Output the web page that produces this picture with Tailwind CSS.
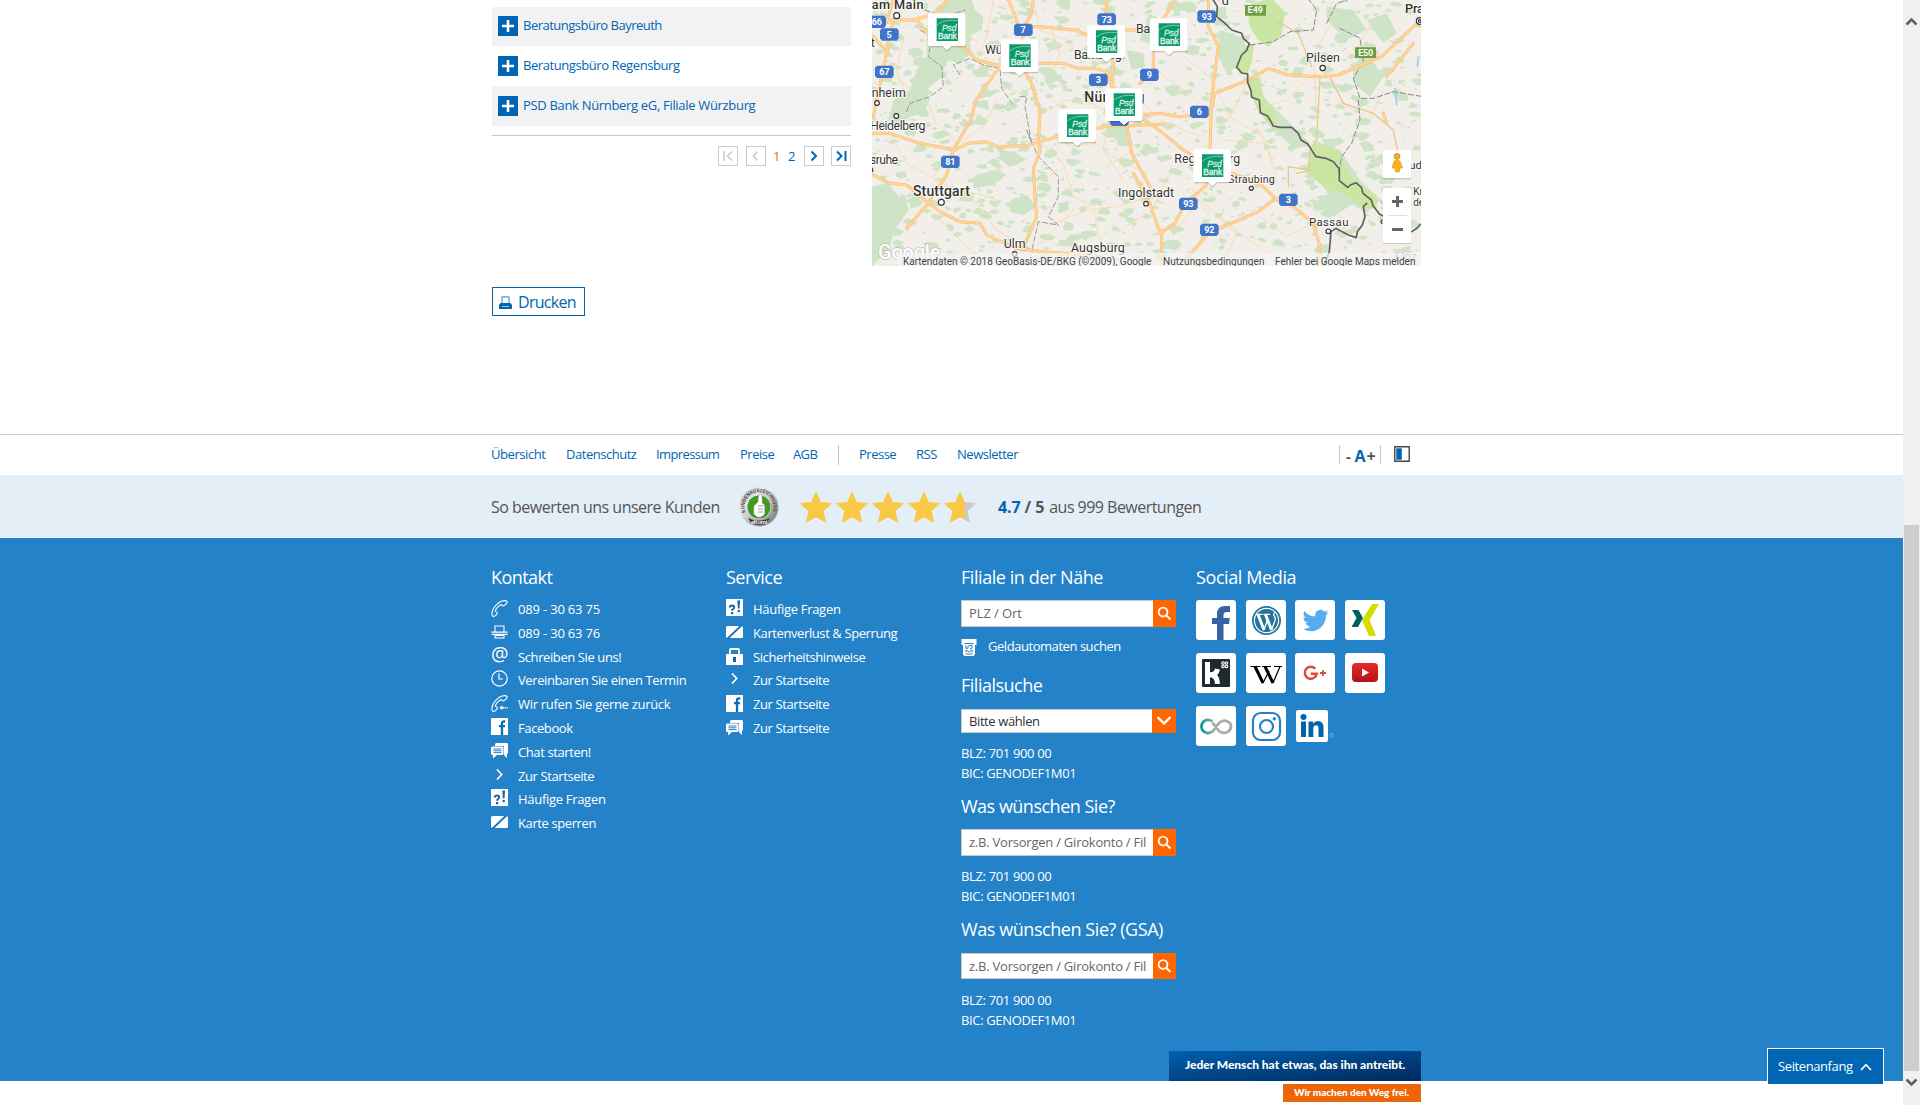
<!DOCTYPE html>
<html lang="de">
<head>
<meta charset="utf-8">
<title>PSD Bank</title>
<script src="https://cdn.jsdelivr.net/npm/@tailwindcss/browser@4"></script>
</head>
<body class="relative flex h-[1105px] overflow-hidden bg-white font-['Open_Sans','Noto_Sans',sans-serif] text-[13px] tracking-[-0.4px]">

<!-- shared symbols -->
<svg class="hidden">
  <symbol id="plus" viewBox="0 0 20 20"><path fill="#0066b3" d="M0 0h20v20H0z"/><path stroke="#fff" stroke-width="2.6" d="M10 4v12M4 10h12"/></symbol>
  <symbol id="phone" viewBox="0 0 17 17"><path fill="none" stroke="#fff" stroke-width="1.1" stroke-linejoin="round" d="M16 1.200C13.500-.2 9 1 6 4.200C2.500 7.700.2 12 1.200 15.500C1.600 16.600 2.800 16.500 3.800 16C5 15.200 6.300 14 6.300 13C6.300 12 5 11.400 4.300 11.200C5 8.500 7.500 5.800 10.500 4.500C11 5.400 11.700 6.200 12.700 5.800C14.500 5 16.800 2.500 16 1.200Z"/></symbol>
  <symbol id="callback" viewBox="0 0 17 17"><path fill="none" stroke="#fff" stroke-width="1.100" stroke-linejoin="round" d="M16 1.200C13.500-.2 9 1 6 4.200C2.500 7.700.2 12 1.200 15.500C1.600 16.600 2.800 16.500 3.800 16C5 15.200 6.300 14 6.300 13C6.300 12 5 11.400 4.300 11.200C5 8.500 7.500 5.800 10.500 4.500C11 5.400 11.700 6.200 12.700 5.800C14.500 5 16.800 2.500 16 1.200Z"/><path fill="#fff" d="M8.300 12.700l3-2.300v1.600h2v1.400h-2V15zM14 12h1v1.400h-1zM15.700 12h1v1.400h-1z"/></symbol>
  <symbol id="fax" viewBox="0 0 17 14"><path fill="none" stroke="#fff" stroke-width="1.100" d="M4 7V1h9v6M4 10.500h9V13H4z"/><path fill="#fff" d="M.5 6.500h16v1.200H.5zM.5 8.700h16V10H.5z"/></symbol>
  <symbol id="clock" viewBox="0 0 17 17"><circle cx="8.500" cy="8.500" r="7.700" fill="none" stroke="#fff" stroke-width="1.200"/><path fill="none" stroke="#fff" stroke-width="1.200" d="M8 3.500V9h4"/></symbol>
  <symbol id="fb" viewBox="0 0 17 17"><path fill="#fff" d="M0 0h17v17H0z"/><path fill="none" stroke="#0f6db8" stroke-width="2.300" d="M14.300 3.300h-1.300q-2 0-2 2V17M8 8.200h6"/></symbol>
  <symbol id="chat" viewBox="0 0 17 16"><path fill="#fff" d="M5 0h11l1 1v9l-1 1v4l-3-3V3H4V1z"/><path fill="#fff" d="M1 3.500h10.500l1 1V11l-1 1H6l-4 3.500V12H1l-1-1V4.500z"/><path stroke="#2482c8" d="M2.500 6h8M2.500 7.800h8M2.500 9.600h8"/></symbol>
  <symbol id="chev" viewBox="0 0 17 17"><path fill="none" stroke="#fff" stroke-width="1.700" d="M6 3.500l4.700 5L6 13.500"/></symbol>
  <symbol id="faq" viewBox="0 0 17 17"><path fill="#fff" d="M0 0h17v17H0z"/><path fill="none" stroke="#1463a8" stroke-width="1.900" d="M3.600 8.500q.3-2 2.400-2 2.200 0 2.200 1.800 0 1.200-1.200 1.800-.9.500-.9 1.700"/><path fill="#1463a8" d="M5 13h2.200v2.200H5zM11.300 1.500h2.800l-.6 8h-1.600zM11.600 11h2.200v2.200h-2.200z"/></symbol>
  <symbol id="card" viewBox="0 0 17 14"><rect x="0" y="1" width="17" height="12" rx="1.500" fill="#fff"/><path stroke="#1d74b8" stroke-width="1.900" d="M1.200 14L15.800 0"/></symbol>
  <symbol id="lock" viewBox="0 0 17 17"><path fill="none" stroke="#fff" stroke-width="1.800" d="M4 7V2q0-1 1-1h7q1 0 1 1v5"/><path fill="#fff" d="M0 6h17v11H0z"/><path fill="#1463a8" d="M7 9h3v5H7z"/></symbol>
  <symbol id="atm" viewBox="0 0 16 17"><path fill="#fff" d="M.5 0h15v6h-1.500v9.500L12.500 17h-9L2 15.500V6H.5z"/><path fill="none" stroke="#2482c8" stroke-width="1" d="M3.500 4.500h9M4.500 15h7M5 6.500v2.800h2V7M7.500 6.500h3.500v2.800H9M5 13v-2l3 2 3-2v2.500"/></symbol>
  <symbol id="lens" viewBox="0 0 24 27"><circle cx="10.500" cy="12" r="4.600" fill="none" stroke="#fff" stroke-width="1.900"/><path stroke="#fff" stroke-width="2.200" d="M13.700 15.200l4.500 4.500"/></symbol>
  <symbol id="star" viewBox="0 0 32 31"><path stroke-linejoin="round" stroke-width="1.500" d="M16 1.300l4.300 9.900 10.500 1-8 7.100 2.400 10.700L16 24.900 6.800 30l2.400-10.700-8-7.100 10.500-1z"/></symbol>
  <symbol id="pin" viewBox="0 0 120 116"><path fill="#000" opacity=".18" d="M8 6h106v98H72l-13 14-14-14H8z"/><path fill="#fff" d="M9 2h98q7 0 7 7v84q0 7-7 7H72l-14 13-14-13H8q-7 0-7-7V9q0-7 8-7z"/><path fill="#0b9a6b" d="M27 17h64v68H27z"/><path fill="none" stroke="#b5e0d0" stroke-width="2" d="M28 37Q50 19 90 24"/><text x="43" y="56" fill="#d8f2e8" font-family="Liberation Sans" font-size="27" font-style="italic" stroke="#d8f2e8" stroke-width=".8" textLength="43" lengthAdjust="spacingAndGlyphs">Psd</text><text x="31" y="80" fill="#e6f7f0" font-family="Liberation Sans" font-size="26" stroke="#e6f7f0" stroke-width="1" textLength="56" lengthAdjust="spacingAndGlyphs">Bank</text></symbol>
</svg>

<div class="flex w-[1903px] shrink-0 flex-col">

  <!-- branch list and map -->
  <section class="flex h-[434px] shrink-0 pl-[492px]">
    <div class="flex w-[359px] flex-col pt-[7px] text-[#0066b3]">
      <div class="flex h-[39px] items-center gap-[5px] bg-[#f2f2f2] pb-[1px] pl-[6px]"><svg class="size-[20px]"><use href="#plus"/></svg><a class="tracking-[-0.5px]">Beratungsbüro Bayreuth</a></div>
      <div class="flex h-[40px] items-center gap-[5px] pl-[6px]"><svg class="size-[20px]"><use href="#plus"/></svg><a class="tracking-[-0.42px]">Beratungsbüro Regensburg</a></div>
      <div class="flex h-[40px] items-center gap-[5px] bg-[#f2f2f2] pl-[6px]"><svg class="size-[20px]"><use href="#plus"/></svg><a class="tracking-[-0.32px]">PSD Bank Nürnberg eG, Filiale Würzburg</a></div>
      <div class="mt-[9px] flex h-[31px] items-end justify-end border-t border-[#c8c8c8] leading-[20px]">
        <svg class="size-[20px] border border-[#ccc]" viewBox="0 0 18 18" fill="none" stroke="#ccc" stroke-width="1.700"><path d="M5 4v10M13 4.500L8.500 9l4.500 4.500"/></svg>
        <svg class="ml-[8px] size-[20px] border border-[#ccc]" viewBox="0 0 18 18" fill="none" stroke="#ccc" stroke-width="1.700"><path d="M10.500 4.500L6.500 9l4 4.500"/></svg>
        <span class="ml-[7px] w-[8px] text-[#f60]">1</span><span class="ml-[7px] w-[8px]">2</span>
        <svg class="ml-[8px] size-[20px] border border-[#ccc]" viewBox="0 0 18 18" fill="none" stroke="#0066b3" stroke-width="2"><path d="M6.500 4.500L11 9l-4.500 4.500"/></svg>
        <svg class="ml-[7px] size-[20px] border border-[#ccc]" viewBox="0 0 18 18" fill="none" stroke="#0066b3" stroke-width="2"><path d="M5 4.500L9.500 9 5 13.500M13.500 4v10"/></svg>
      </div>
      <a class="mt-[121px] flex h-[29px] w-[93px] items-center gap-[6px] border border-[#0066b3] pl-[6px] text-[16px] tracking-[-0.7px]">
        <svg class="mt-[1px] h-[13px] w-[13px] shrink-0" viewBox="0 0 13 13"><path fill="none" stroke="#5a9bd0" stroke-width="1.200" d="M3 7V.8h7V7"/><path fill="#0066b3" d="M1.500 7h10L13 9v4H0V9z"/><path fill="#9cc4e4" d="M3 10h7v1H3z"/></svg>Drucken</a>
    </div>

    <svg id="map" class="ml-[21px] h-[266px] w-[549px] shrink-0 bg-[#f2efeb]" viewBox="872 0 549 266" font-family="Roboto, sans-serif">
      <g id="woods" fill="#cfe3c6"></g>
      <!-- west half -->
      <g transform="translate(870 0) scale(.33333)" fill="none" stroke-linejoin="round" stroke-linecap="round">
        <g fill="#cfe3c6">
          <path d="M170 80l30-60 40-20h65l10 30 25 20-5 40-40 20 10 50-40 30-30-10-30 60-40 30 15 30-20 40-40 10-40 30-25-20 15-60 50-30 20-60 30-40z"/>
          <path d="M5 560l50-10 30 40 20-5 10 45-40 60-20 60-50 50z"/><path d="M420 600l50-15 30 35-40 25-40-10zM310 530l60-20 30 20-30 25-60 10zM380 470l60-10 30 20-50 20z"/>
          <path d="M520 220l35-10 15 30-40 15zM730 380l40 5 20 50-40 5-20-30zM770 150l50 10 5 40-40 10z"/>
        </g>
        <g stroke="#f7dcae" stroke-width="3">
          <path d="M60 400l50 90 110 60 70 50M250 450l-60 80 40 60 90-10 60 20M180 630l90 90 60 60M330 190l60 70 70 20M490 0l20 90 80 30 60 80 40 10M250 440l90-60 40-80M540 80l30 80-30 80M500 350l90-50 70 10M510 430l70 60 30 100 60 30 15 90 30 90M620 620l-120 120M530 680l120-50 90-10 100-30M650 300l70 40-20 110 60 90M100 120l-20 90 30 80-30 90M10 250l60-20 60 40M260 0l-20 70 90 60M370 0l-20 110-30 70M600 440l80-10 60 50 90 40M310 600l70 90 50 30M560 510l-70 60M170 300l30 70 60 60M710 500l80-50M740 700l90-60"/>
        </g>
        <g stroke="#999" stroke-width="3" stroke-dasharray="16 8"><path d="M150 90l35 20-10 60 40 30 5 60-40 30-60 20-10 25M165 30l60 20 60-20M270 225l-20-30 50-20 40 20 50 10 5 60 35 50M450 290l20 0-5 30 20 110-15-40 35 80 60 60 0 60-30 60 30 25-60-10-20 90"/></g>
        <g stroke="#fbb766" stroke-width="9">
          <path d="M10 350l60-290M0 400l60 0 90 30 105 20 40-20 50-5 40 15 85-3 120-35 130-25 60 0 100-5"/><path d="M60 60h80l50 60 90 20 40 40 60 15 100-5 100 0 45 15 50 0 35 10 20 55"/><path d="M385 205l-70 100-10 50-55 95-20 75-60 90-60 70"/><path d="M460 100l-10 90 35 60 25 85-5 90 5 30-20 50 5 85 5 60-25 60-15 30"/><path d="M0 520l60 30 50 5 60 50 40 30 60 30 60 5 20 35 90 40 80 10 60 5 110 10"/><path d="M415 0l20 45 10 35 70 0 100 10 45 20 100-20 90 0"/>
          <path d="M490 0l-10 50-25 40M710 0v60l0 60 20 70-5 80-20 70M770 370l15 90 55 100M0 50l50 15 20-65M130 60l70-20 30-40M0 100l55 60"/>
        </g>
        <g stroke="#ffd59b" stroke-width="6">
          <path d="M10 350l60-290M0 400l60 0 90 30 105 20 40-20 50-5 40 15 85-3 120-35 130-25 60 0 100-5"/><path d="M60 60h80l50 60 90 20 40 40 60 15 100-5 100 0 45 15 50 0 35 10 20 55"/><path d="M385 205l-70 100-10 50-55 95-20 75-60 90-60 70"/><path d="M460 100l-10 90 35 60 25 85-5 90 5 30-20 50 5 85 5 60-25 60-15 30"/><path d="M0 520l60 30 50 5 60 50 40 30 60 30 60 5 20 35 90 40 80 10 60 5 110 10"/><path d="M415 0l20 45 10 35 70 0 100 10 45 20 100-20 90 0"/>
          <path d="M490 0l-10 50-25 40M710 0v60l0 60 20 70-5 80-20 70M770 370l15 90 55 100M0 50l50 15 20-65M130 60l70-20 30-40M0 100l55 60"/>
        </g>
      </g>
      <!-- east half -->
      <g transform="translate(1140 0) scale(.33333)" fill="none" stroke-linejoin="round" stroke-linecap="round">
        <g fill="#cfe3c6">
          <path d="M240 90l60 20 20 30-30 60-30 20-30-60zM330 240l50 60 60 60 80 80-60 0-70-60-40-60zM560 20l80 10 40 60-60 30-60-60zM640 190l50-20 40 60-40 60-50-40zM520 420l80 30 60 90 60 60-40 40-80-50-90-60zM680 60l60-20 30 60-40 30zM580 570l60 40-60 40-60-40zM20 60l50 20-20 60-50-20z"/>
        </g>
        <g fill="#cbe6a3"><path d="M325 70l10-60 60-15 40 40-10 70-40 35-30-20-20-30zM322 135l20 0-5 40-15 50-38-20 10-30zM320 240l40-10 10 60 30 40 10 40-30-5-30-40-20-50zM520 440l20-10 60 25 20 60 50 50 40 20 0 40-40 0-50-40-60-15-60-60z"/></g>
        <g stroke="#f7dcae" stroke-width="3"><path d="M0 300l60 60 120 50 90-60 60-120M130 170l80 60 60 120 100 60 40 120M250 420l120 10M30 640l60-120 80-60M100 700l80-100 120 100 80 60M230 640l60 60-40 90M360 650l80 60 80-40M580 60l-60 100 10 200M590 300l100 60 40-90M340 330l100-30 60-60M700 60l-60 100M400 480l-50-100M170 300l-120-90M680 720l-90-80M740 700l60-60M150 560l60 90"/></g>
        <g stroke="#e3c98c" stroke-width="4"><path d="M405 60l70 40 40 100M540 230l-10 190-20 30-5 60-60-10 0 60M570 230l40 80 90 30 60 50 15 70M470 520l50-10"/></g>
        <g stroke="#888" stroke-width="3" stroke-dasharray="16 8"><path d="M330 135l70-10 50-30 70-5 10-60-30-40M560 70l30-60 30-10M600 85l60 30 10 70-30 50 20 60 40 0 60-20 90 15M655 300l5 60-25 70-30 40-10 50"/></g>
        <g stroke="#fbb766" stroke-width="9"><path d="M205 0l0 80 30 60-20 150-5 160 15 60-30 50-60 50-30 60-45 30-30-90-50-90M65 690v110M0 345l60-5 60 10 90-10 15-60 100-40 60-35 60 20 90 5 60-5 70-30 60-25 100-95 70 10M0 350l70 50 60 50 80 50 80 25 80 35 30 30 60 30 60 50 20 70-10 75M145 770l60-70 150-65 45-35 50-5M40 150l0 60-40 40M105 0l-30 50M740 230l80-100M730 340l10 30"/></g>
        <g stroke="#ffd59b" stroke-width="6"><path d="M205 0l0 80 30 60-20 150-5 160 15 60-30 50-60 50-30 60-45 30-30-90-50-90M65 690v110M0 345l60-5 60 10 90-10 15-60 100-40 60-35 60 20 90 5 60-5 70-30 60-25 100-95 70 10M0 350l70 50 60 50 80 50 80 25 80 35 30 30 60 30 60 50 20 70-10 75M145 770l60-70 150-65 45-35 50-5M40 150l0 60-40 40M105 0l-30 50M740 230l80-100M730 340l10 30"/></g>
        <path stroke="#606060" stroke-width="5" d="M220 0l12 20-2 30 25 20 20 20 30 10 5 15 18 16-8 20-15 14-15 36 15 18 18 3 0 25 10 25 2 20 23 8 3 38 22 10 17 30 20 4 35 0 20 18 8 20 20 12 17 26 8 12 30 5 22 10 18 22 0 35 25 20 10-8 15-6 16 14 5 18 25 20 5 17 20 26 25 11 30 22 5 20M680 610l-10 10 5 30-8 25-15 20-3 18-24-8-27-14-10-6-15 10-3 35-2 25-10 28-10 16M815 695l16-10 10-12"/>
        <path stroke="#8fc3f5" stroke-width="4" d="M765 265l5 50M835 175l-3 25M720 600l8 12"/>
      </g>
      <!-- road shields -->
      <g transform="translate(870 0) scale(.33333)" font-size="27" font-weight="700" fill="#fff" text-anchor="middle">
        <g fill="#3f74c8"><path id="sh" d="M-22-19h44l6 6v24l-6 7h-44l-6-7V-13z" transform="translate(20 66)"/><use href="#sh" x="38" y="38"/><use href="#sh" x="23" y="150"/><use href="#sh" x="440" y="24"/><use href="#sh" x="690" y="-7"/><use href="#sh" x="665" y="174"/><use href="#sh" x="221" y="420"/><use href="#sh" x="728" y="294"/><use href="#sh" x="818" y="159"/><use href="#sh" x="990" y="-16"/><use href="#sh" x="968" y="270"/><use href="#sh" x="935" y="546"/><use href="#sh" x="998" y="624"/><use href="#sh" x="1235" y="534"/></g>
        <text x="20" y="75">66</text><text x="57" y="113">5</text><text x="43" y="225">67</text><text x="459" y="100">7</text><text x="710" y="69">73</text><text x="685" y="249">3</text><text x="241" y="495">81</text><text x="838" y="234">9</text><text x="1010" y="60">93</text><text x="988" y="345">6</text><text x="955" y="621">93</text><text x="1018" y="699">92</text><text x="1255" y="609">3</text>
        <g fill="#6d9e42"><path d="M1125 15h63v32h-63zM1455 142h63v32h-63z"/></g><text x="1156" y="40">E49</text><text x="1487" y="168">E50</text>
      </g>
      <!-- places -->
      <g transform="translate(870 0) scale(.33333)" fill="#333" stroke="#fff" stroke-width="6" stroke-opacity=".75" paint-order="stroke" font-size="37" stroke-linejoin="round">
        <text x="5" y="26" font-size="38" font-weight="500" textLength="155">am Main</text>
        <text x="5" y="292" textLength="102">nheim</text><text x="0" y="391" textLength="166">Heidelberg</text><text x="0" y="493" textLength="84">sruhe</text><text x="-18" y="140">dt</text>
        <text x="129" y="587" font-size="42" font-weight="500" textLength="170">Stuttgart</text><text x="401" y="745" textLength="65">Ulm</text><text x="603" y="756" textLength="161">Augsburg</text>
        <text x="345" y="162">Wü</text><text x="612" y="178" textLength="143">Bamberg</text><text x="643" y="305" font-size="42" font-weight="500" textLength="180">Nürnberg</text><text x="798" y="99">Ba</text>
        <text x="744" y="592" textLength="168">Ingolstadt</text><text x="913" y="490" textLength="197">Regensburg</text><text x="1074" y="549" font-size="32" textLength="140">Straubing</text>
        <text x="1308" y="187" textLength="101">Pilsen</text><text x="1317" y="678" font-size="34" textLength="118">Passau</text><text x="1605" y="38" font-size="38" font-weight="500">Prag</text><text x="1618" y="507" font-size="34">udw</text><text x="1630" y="585" font-size="30">Kr</text><text x="1630" y="618" font-size="30">de</text><text x="1575" y="783" fill="#888">Linz</text><text x="1055" y="14" font-size="38">d</text>
      </g>
      <g transform="translate(870 0) scale(.33333)" fill="#fff" stroke="#333" stroke-width="3.500"><circle cx="80" cy="47" r="9"/><circle cx="21" cy="309" r="7"/><circle cx="79" cy="348" r="7"/><circle cx="214" cy="607" r="9"/><circle cx="434" cy="762" r="7"/><circle cx="828" cy="611" r="7"/><circle cx="1144" cy="565" r="6"/><circle cx="1358" cy="204" r="8"/><circle cx="1375" cy="694" r="7"/><circle cx="1649" cy="63" r="10"/><circle cx="1649" cy="63" r="4"/><path fill="#ddd" d="M0 504q10-2 8 12M1537 659q-8 6 0 12"/></g>
      <!-- branch markers -->
      <g transform="translate(870 0) scale(.33333)"><use href="#pin" x="173" y="38" width="120" height="116"/><use href="#pin" x="391" y="116" width="120" height="116"/><use href="#pin" x="651" y="74" width="120" height="116"/><use href="#pin" x="704" y="263" width="120" height="116"/><use href="#pin" x="564" y="326" width="120" height="116"/><use href="#pin" x="839" y="53" width="120" height="116"/><use href="#pin" x="969" y="446" width="120" height="116"/></g>
      <!-- controls and credits -->
      <g fill="#000" opacity=".15"><rect x="1383" y="150.500" width="28" height="29" rx="1"/><rect x="1383" y="189" width="28" height="55" rx="1"/></g>
      <g fill="#fff"><rect x="1383" y="150" width="28" height="28" rx="1"/><rect x="1383" y="188" width="28" height="55" rx="1"/></g>
      <path stroke="#e0e0e0" d="M1388 215.500h19"/><path stroke="#666" stroke-width="3" d="M1392 201.500h11M1397.500 196v11M1392 229.500h11"/>
      <path fill="#f5b21d" stroke="#d99a12" stroke-width=".6" d="M1394 161q3-2 6 0l2.500 6.500-1.500 1-1-1.500-.5 5h-4l-.8-5-1 1.500-1.500-1z"/><circle cx="1397" cy="156.500" r="3" fill="#f5b21d" stroke="#9b6c10" stroke-width=".5"/><path fill="#f5b21d" d="M1395 164h1.800v8h-1.800zM1397.600 164h1.800v8h-1.800z"/>
      <text x="878" y="259" font-size="20" font-weight="500" fill="#fff" stroke="#999" stroke-width="1.600" stroke-opacity=".5" paint-order="stroke" textLength="62">Google</text>
      <path fill="#f5f5f5" fill-opacity=".7" d="M897 253h524v13H897z"/>
      <g font-size="10" fill="#444"><text x="903" y="265" textLength="248">Kartendaten © 2018 GeoBasis-DE/BKG (©2009), Google</text><text x="1163" y="265" textLength="101">Nutzungsbedingungen</text><text x="1275" y="265" textLength="140">Fehler bei Google Maps melden</text></g>
    </svg>
  </section>

  <!-- meta navigation -->
  <nav class="flex h-[41px] shrink-0 items-center border-t border-[#c8c8c8] pl-[491px] text-[13px] text-[#0066b3]">
    <a class="w-[75px] tracking-[-0.430px]">Übersicht</a><a class="w-[90px] tracking-[-0.470px]">Datenschutz</a><a class="w-[84px] tracking-[-0.600px]">Impressum</a><a class="w-[53px] tracking-[-0.500px]">Preise</a><a class="w-[45px] tracking-[-0.600px]">AGB</a>
    <span class="h-[20px] w-[21px] border-l border-[#c8c8c8]"></span>
    <a class="w-[57px] tracking-[-0.500px]">Presse</a><a class="w-[41px] tracking-[-0.500px]">RSS</a><a class="w-[382px] tracking-[-0.480px]">Newsletter</a>
    <span class="-mt-[2px] flex h-[19px] w-[42px] items-center gap-[4px] border-x border-[#c8c8c8] pt-[4px] pl-[6px] font-bold text-[#555]"><span class="text-[15px]">-</span><span class="flex items-center text-[16px] tracking-[0px] text-[#0066b3]">A<span class="pl-[1px] text-[#555]">+</span></span></span>
    <svg class="-mt-[2px] ml-[13px] size-[16px]" viewBox="0 0 16 16"><path fill="#fff" stroke="#444" stroke-width="1.400" d="M.8.8h14.400v14.400H.8z"/><path fill="#0066b3" d="M2.300 2.300h5.500v11.400H2.300z"/></svg>
  </nav>

  <!-- customer rating -->
  <section class="flex h-[63px] shrink-0 items-center bg-[#e4eef7] pl-[491px] text-[16px] text-[#555]">
    <span class="w-[248px] whitespace-nowrap tracking-[-0.500px]">So bewerten uns unsere Kunden</span>
    <svg class="size-[40px] shrink-0" viewBox="0 0 40 40">
      <defs><linearGradient id="silver" x1="0" y1="0" x2="1" y2="1"><stop offset="0" stop-color="#8a8a8a"/><stop offset=".3" stop-color="#e8e8e8"/><stop offset=".7" stop-color="#a5a5a5"/><stop offset="1" stop-color="#666"/></linearGradient><path id="arc" d="M6.500 25A14.500 14.500 0 1 1 33.500 25"/></defs>
      <circle cx="20" cy="20" r="19.500" fill="url(#silver)"/><circle cx="20" cy="20" r="12.200" fill="#ddd"/><circle cx="20" cy="20" r="11.500" fill="#3f9a22"/>
      <text font-family="Liberation Sans" font-size="5" font-weight="700" fill="#444" letter-spacing="0"><textPath href="#arc" textLength="55" lengthAdjust="spacingAndGlyphs">KUNDENAUSZEICHNUNG</textPath></text>
      <path fill="#fff" stroke="#888" stroke-width=".5" d="M19.500 9q2-3 3.500-1l.3 8q2.500 1 2.500 4v7q-3 4-8 3l-3-3v-8l4-4z"/><path stroke="#777" stroke-width=".7" d="M19 19h5M19 22h5M19 25h5"/>
      <path fill="#3a3a3a" d="M9 31q11 5 22 0l-3 5q-8 4-16 0z"/><text x="12" y="36.500" font-family="Liberation Sans" font-size="6" font-weight="700" fill="#eee" textLength="16">eKomi</text>
    </svg>
    <svg class="ml-[21px] h-[32px] w-[178px] shrink-0" viewBox="0 0 178 32"><defs><linearGradient id="part"><stop offset=".67" stop-color="#f9c846"/><stop offset=".67" stop-color="#c9cbd0"/></linearGradient></defs>
      <g fill="#f9c846" stroke="#f9c846"><use href="#star" width="32" height="32"/><use href="#star" x="36" width="32" height="32"/><use href="#star" x="72" width="32" height="32"/><use href="#star" x="108" width="32" height="32"/></g><use href="#star" x="144" width="32" height="32" fill="url(#part)" stroke="url(#part)"/></svg>
    <b class="ml-[20px] whitespace-nowrap tracking-[-0.100px]"><span class="text-[#0066b3]">4.7</span> / 5</b><span class="ml-[5px] whitespace-nowrap tracking-[-0.530px]">aus 999 Bewertungen</span>
  </section>

  <!-- footer -->
  <footer class="relative flex h-[543px] shrink-0 bg-[#2482c8] pl-[491px] text-white">
    <div class="w-[235px] pt-[27px]">
      <h3 class="h-[33px] text-[18px] leading-[24px] tracking-[-0.550px]">Kontakt</h3>
      <ul class="flex flex-col leading-[23.8px] whitespace-nowrap">
        <li class="flex h-[23.800px] gap-[10px] tracking-[-0.180px]"><svg class="mt-[2px] size-[17px]"><use href="#phone"/></svg>089 - 30 63 75</li>
        <li class="flex h-[23.800px] gap-[10px] tracking-[-0.180px]"><svg class="mt-[3px] h-[14px] w-[17px]"><use href="#fax"/></svg>089 - 30 63 76</li>
        <li class="flex h-[23.800px] gap-[10px]"><span class="-mt-[4px] w-[17px] text-[19.500px] tracking-[-1px]">@</span>Schreiben Sie uns!</li>
        <li class="flex h-[23.800px] gap-[10px]"><svg class="mt-[1px] size-[17px]"><use href="#clock"/></svg>Vereinbaren Sie einen Termin</li>
        <li class="flex h-[23.800px] gap-[10px] tracking-[-0.300px]"><svg class="mt-[2px] size-[17px]"><use href="#callback"/></svg>Wir rufen Sie gerne zurück</li>
        <li class="flex h-[23.800px] gap-[10px]"><svg class="mt-[1px] size-[17px]"><use href="#fb"/></svg>Facebook</li>
        <li class="flex h-[23.800px] gap-[10px]"><svg class="mt-[2px] h-[16px] w-[17px]"><use href="#chat"/></svg>Chat starten!</li>
        <li class="flex h-[23.800px] gap-[10px]"><svg class="mt-[1px] size-[17px]"><use href="#chev"/></svg>Zur Startseite</li>
        <li class="flex h-[23.800px] gap-[10px] tracking-[-0.300px]"><svg class="mt-[1px] size-[17px]"><use href="#faq"/></svg>Häufige Fragen</li>
        <li class="flex h-[23.800px] gap-[10px]"><svg class="mt-[3px] h-[14px] w-[17px]"><use href="#card"/></svg>Karte sperren</li>
      </ul>
    </div>
    <div class="w-[235px] pt-[27px]">
      <h3 class="h-[33px] text-[18px] leading-[24px] tracking-[-0.510px]">Service</h3>
      <ul class="flex flex-col leading-[23.8px] whitespace-nowrap">
        <li class="flex h-[23.800px] gap-[10px] tracking-[-0.300px]"><svg class="mt-[1px] size-[17px]"><use href="#faq"/></svg>Häufige Fragen</li>
        <li class="flex h-[23.800px] gap-[10px]"><svg class="mt-[3px] h-[14px] w-[17px]"><use href="#card"/></svg>Kartenverlust &amp; Sperrung</li>
        <li class="flex h-[23.800px] gap-[10px]"><svg class="mt-[2px] size-[17px]"><use href="#lock"/></svg>Sicherheitshinweise</li>
        <li class="flex h-[23.800px] gap-[10px]"><svg class="mt-[1px] size-[17px]"><use href="#chev"/></svg>Zur Startseite</li>
        <li class="flex h-[23.800px] gap-[10px]"><svg class="mt-[2px] size-[17px]"><use href="#fb"/></svg>Zur Startseite</li>
        <li class="flex h-[23.800px] gap-[10px]"><svg class="mt-[3px] h-[16px] w-[17px]"><use href="#chat"/></svg>Zur Startseite</li>
      </ul>
    </div>
    <div class="w-[235px] pt-[27px]">
      <h3 class="h-[35px] text-[18px] leading-[24px] tracking-[-0.440px]">Filiale in der Nähe</h3>
      <div class="flex h-[27px] w-[215px]"><span class="flex flex-1 items-center border border-r-0 border-[#c8c8c8] bg-white pt-[1px] pl-[7px] tracking-[-0.100px] text-[#666]">PLZ / Ort</span><span class="bg-[#f60]"><svg class="h-[27px] w-[23px]"><use href="#lens"/></svg></span></div>
      <div class="mt-[8px] flex h-[24px] items-center gap-[11px] tracking-[-0.450px]"><svg class="h-[17px] w-[16px]"><use href="#atm"/></svg>Geldautomaten suchen</div>
      <h3 class="mt-[14px] h-[36px] text-[18px] leading-[24px] tracking-[-0.500px]">Filialsuche</h3>
      <div class="flex h-[24px] w-[215px]"><span class="flex flex-1 items-center border border-r-0 border-[#c8c8c8] bg-white pt-[2px] pl-[7px] text-[#333]">Bitte wählen</span><span class="bg-[#f60]"><svg class="h-[24px] w-[24px]" viewBox="0 0 24 24" fill="none" stroke="#fff" stroke-width="2.400"><path d="M5.500 8l6.500 6.500L18.500 8"/></svg></span></div>
      <p class="mt-[11px] leading-[19.500px] tracking-[-0.350px]">BLZ: 701 900 00<br>BIC: GENODEF1M01</p>
      <h3 class="mt-[11px] h-[35px] text-[18px] leading-[24px] tracking-[-0.500px]">Was wünschen Sie?</h3>
      <div class="flex h-[27px] w-[215px]"><span class="flex flex-1 items-center border border-r-0 border-[#c8c8c8] bg-white pt-[1px] pl-[7px] tracking-[-0.230px] text-[#666]">z.B. Vorsorgen / Girokonto / Fil</span><span class="bg-[#f60]"><svg class="h-[27px] w-[23px]"><use href="#lens"/></svg></span></div>
      <p class="mt-[11px] leading-[19.500px] tracking-[-0.350px]">BLZ: 701 900 00<br>BIC: GENODEF1M01</p>
      <h3 class="mt-[11px] h-[36px] text-[18px] leading-[24px] tracking-[-0.430px]">Was wünschen Sie? (GSA)</h3>
      <div class="flex h-[26px] w-[215px]"><span class="flex flex-1 items-center border border-r-0 border-[#c8c8c8] bg-white pt-[1px] pl-[7px] tracking-[-0.230px] text-[#666]">z.B. Vorsorgen / Girokonto / Fil</span><span class="bg-[#f60]"><svg class="h-[26px] w-[23px]"><use href="#lens"/></svg></span></div>
      <p class="mt-[12px] leading-[19.500px] tracking-[-0.350px]">BLZ: 701 900 00<br>BIC: GENODEF1M01</p>
    </div>
    <div class="pt-[27px]">
      <h3 class="h-[35px] text-[18px] leading-[24px]">Social Media</h3>
      <div class="grid grid-cols-[repeat(4,40px)] gap-x-[9.600px] gap-y-[13px]">
        <svg class="size-[40px] rounded-[3px] bg-white" viewBox="0 0 40 40"><path fill="#3763a5" d="M21 40V24h-5v-6h5v-4q0-8 8-8h5v6h-3q-3.500 0-3.500 3v3h6.300l-.8 6h-5.500v16z"/></svg>
        <svg class="size-[40px] rounded-[3px] bg-white" viewBox="0 0 40 40"><circle cx="20.500" cy="20.500" r="13.600" fill="none" stroke="#21759b" stroke-width="1.800"/><circle cx="20.500" cy="20.500" r="11.500" fill="#21759b"/><path fill="none" stroke="#fff" stroke-width="2.900" d="M12 14.500l6 15.500M19.500 14.500l6 15.500"/><path fill="none" stroke="#fff" stroke-width="1.300" d="M10 14.300h6.500M17.500 14.300h6.500M18 30l3.700-11M25.500 30l3.500-9.500q.8-2.500-.8-4.500-1.300-2.500 1-3.500"/></svg>
        <svg class="size-[40px] rounded-[3px] bg-white" viewBox="0 0 40 40"><path fill="#55acee" transform="translate(7.500 7.500) scale(1.090)" d="M23.950 4.570a10 10 0 01-2.820.77 4.960 4.960 0 002.160-2.720c-.95.550-2 .95-3.120 1.180a4.920 4.920 0 00-8.380 4.480C7.690 8.090 4.070 6.130 1.640 3.160a4.820 4.820 0 00-.67 2.480c0 1.710.87 3.210 2.190 4.100a4.900 4.900 0 01-2.230-.62v.06a4.920 4.920 0 003.950 4.830 5 5 0 01-2.210.09 4.940 4.940 0 004.600 3.420A9.870 9.870 0 010 19.540a13.990 13.990 0 007.550 2.210c9.050 0 14-7.500 14-13.990 0-.21 0-.42-.02-.63a9.940 9.940 0 002.420-2.560z"/></svg>
        <svg class="size-[40px] rounded-[3px] bg-white" viewBox="0 0 40 40"><path fill="#00605e" d="M7 10h6.500l4.500 8-5 9H6.500l5-9z"/><path fill="#d5dc00" d="M27 4h7l-9.500 16L31 36h-7l-7-16z"/></svg>
        <svg class="size-[40px] rounded-[3px] bg-white" viewBox="0 0 40 40"><rect x="6" y="6" width="28" height="28" rx="1" fill="#1f2a30"/><path fill="none" stroke="#fff" stroke-width="5" d="M11.500 9v22M13.500 22q7 0 8-6M14 21.500q7.500 1 7.500 9.500"/><g fill="none" stroke="#fff" stroke-width="1.100"><circle cx="27" cy="10" r="1.300"/><circle cx="30.500" cy="10" r="1.300"/><circle cx="27" cy="13.500" r="1.300"/><circle cx="30.500" cy="13.500" r="1.300"/></g></svg>
        <svg class="size-[40px] rounded-[3px] bg-white" viewBox="0 0 40 40" stroke="#000" fill="none"><path stroke-width="3" d="M9 13.500l8 16.500M19 13.500l8 16.500"/><path stroke-width="1.200" d="M4.500 13.500h10M16 13.500h9M28 13.500h8M17 30l6-12M27 30l7-16.500"/></svg>
        <svg class="size-[40px] rounded-[3px] bg-white" viewBox="0 0 40 40" stroke="#dd4b39" fill="none"><path stroke-width="2.500" d="M20.300 15.800A6 6 0 1 0 21.700 20.700H15.700"/><path stroke-width="1.800" d="M28 17v6M25 20h6"/></svg>
        <svg class="size-[40px] rounded-[3px] bg-white" viewBox="0 0 40 40"><defs><linearGradient id="yt" x2="0" y2="1"><stop stop-color="#e52d27"/><stop offset="1" stop-color="#b31217"/></linearGradient></defs><rect x="7" y="10" width="26" height="19" rx="4" fill="url(#yt)"/><path fill="#fff" d="M17 15.500l7 4-7 4z"/></svg>
        <svg class="size-[40px] rounded-[3px] bg-white" viewBox="0 0 40 40"><defs><linearGradient id="inf"><stop stop-color="#009aa6"/><stop offset=".45" stop-color="#aaa"/></linearGradient></defs><path fill="none" stroke="url(#inf)" stroke-width="2.700" d="M16.500 15.500C11 11.500 5.500 15.500 5.500 20.500s6 9 11.500 4.500l6-8c5.500-5 12-1 12 3.500s-6 9-12 4.500l-6.500-8.500"/></svg>
        <svg class="size-[40px] rounded-[3px] bg-white" viewBox="0 0 40 40" fill="none" stroke="#2482c8" stroke-width="2.200"><rect x="7" y="7" width="27" height="27" rx="7.500"/><circle cx="20.500" cy="20.500" r="6.500"/><circle cx="28.300" cy="12.700" r="1.700" fill="#2482c8" stroke="none"/></svg>
        <svg class="size-[40px]" viewBox="0 0 40 40"><rect x="1" y="4" width="32" height="32" rx="2" fill="#fff"/><path fill="#0066a9" d="M6 15.500h5V31H6zM13.500 15.500h4.600v2.200q1.500-2.600 4.900-2.600 5.500 0 5.500 6.600V31h-5v-8.500q0-3.300-2.400-3.300-2.800 0-2.800 3.500V31h-4.800z"/><circle cx="8.500" cy="11" r="3" fill="#0066a9"/><circle cx="36.500" cy="29.500" r="2" fill="none" stroke="#6fb0e0" stroke-width=".8"/><path stroke="#6fb0e0" stroke-width=".8" d="M36 31v-3h1v3"/></svg>
      </div>
    </div>

    <!-- claim, overlapping the lower edge -->
    <div class="absolute top-[513px] left-[1169px] flex w-[252px] flex-col items-end font-['Lato','Open_Sans',sans-serif] font-black whitespace-nowrap">
      <div class="flex h-[30px] w-full items-center bg-linear-to-br from-[#0060ae] to-[#002a5c] pb-[2px] pl-[16px] text-[12px] tracking-[-0.020px]">Jeder Mensch hat etwas, das ihn antreibt.</div>
      <div class="mt-[3px] flex h-[18px] w-[138px] items-center bg-[#ec6608] pb-[1px] pl-[11px] text-[10px] tracking-[-0.050px]">Wir machen den Weg frei.</div>
    </div>
    <a class="absolute top-[510px] left-[1767px] flex h-[36px] w-[117px] items-center border border-b-0 border-white bg-[#0066b3] pt-[1px] pl-[10px]">Seitenanfang<svg class="ml-[7px] h-[8px] w-[12px]" viewBox="0 0 12 8" fill="none" stroke="#fff" stroke-width="1.800"><path d="M1 7l5-5.300L11 7"/></svg></a>
  </footer>
</div>

<!-- scrollbar -->
<div class="flex w-[17px] flex-col items-center bg-[#f0f0f0]">
  <svg class="mt-[16px] h-[10px] w-[13px]" viewBox="0 0 13 10" fill="none" stroke="#606060" stroke-width="2.600"><path d="M1.500 8.500l5-5 5 5"/></svg>
  <span class="mt-[499px] h-[546px] w-[15px] bg-[#cdcdcd]"></span>
  <svg class="mt-[7px] h-[10px] w-[13px]" viewBox="0 0 13 10" fill="none" stroke="#606060" stroke-width="2.600"><path d="M1.500 1.500l5 5 5-5"/></svg>
</div>

<script>
// Small forest patches scattered over the map with a fixed seed.
let s = 7;
const rnd = () => (s = (s * 16807) % 2147483647) / 2147483647;
let d = '';
for (let i = 0; i < 1100; i++) {
  const x = 872 + rnd() * 549, y = rnd() * 262, r = 1 + rnd() * rnd() * 7;
  d += 'M';
  for (let k = 0; k < 7; k++) {
    const a = k / 7 * 6.283, q = r * (0.45 + rnd() * 0.8);
    d += (k ? 'L' : '') + (x + Math.cos(a) * q * 1.4).toFixed(1) + ' ' + (y + Math.sin(a) * q * 0.8).toFixed(1);
  }
  d += 'z';
}
const p = document.createElementNS('http://www.w3.org/2000/svg', 'path');
p.setAttribute('d', d);
document.getElementById('woods').append(p);
</script>
</body>
</html>
